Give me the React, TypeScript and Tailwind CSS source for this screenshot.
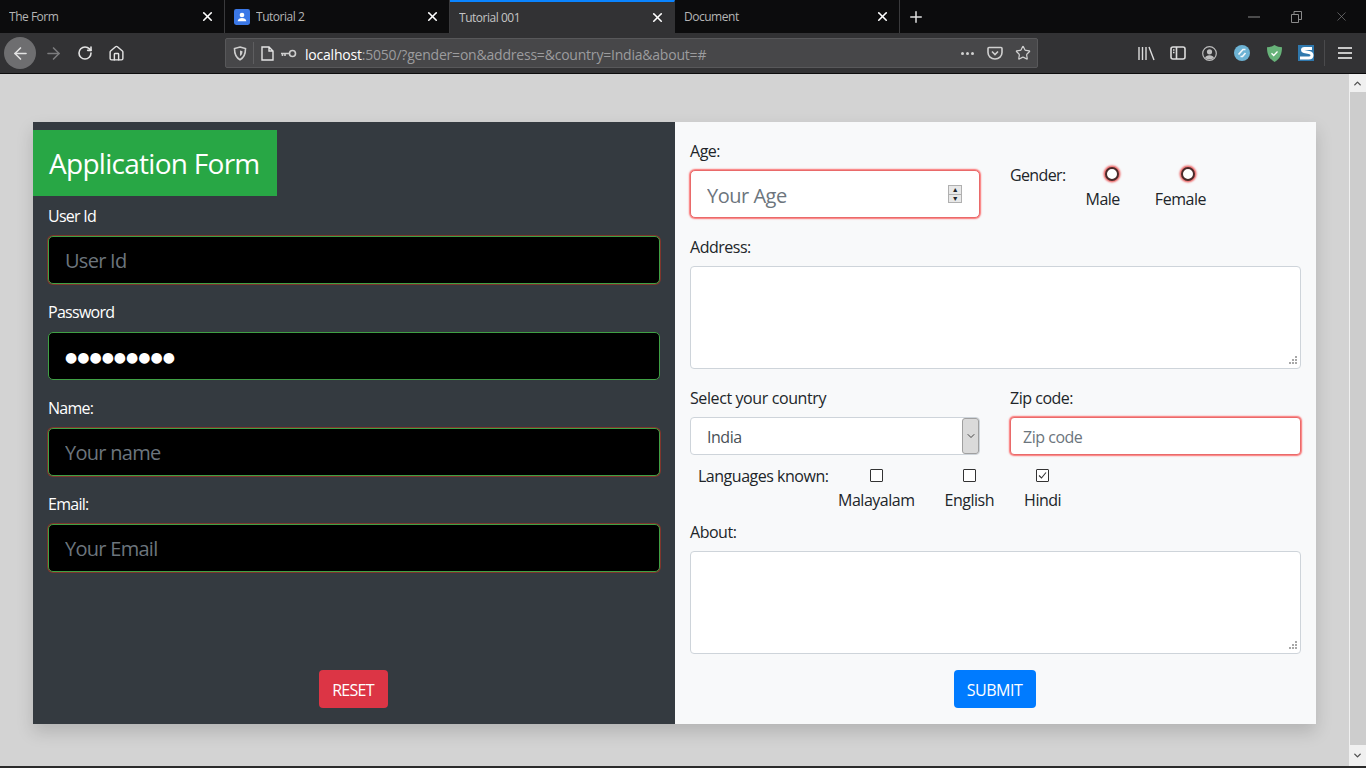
import React from 'react';
import {
    ArrowLeft,
    ArrowRight,
    ChevronDown,
    ChevronUp,
    Home,
    Plus,
    RotateCw,
    Star,
    X,
} from 'lucide-react';

const redGlow = 'shadow-[0_0_1.5px_1px_rgba(255,0,0,0.55)]';

const Tab: React.FC<{ title: string; active?: boolean; favicon?: boolean }> = ({ title, active, favicon }) => (
    <div
        className={`flex w-[225px] h-full items-center pl-[9px] pr-[9px] text-[12px] border-r ${
            active
                ? 'bg-[#323234] border-t-2 border-t-[#0a84ff] border-r-transparent text-[#c4c4c4]'
                : 'border-r-[#3a3a3c] text-[#b5b5b5]'
        }`}
    >
        {favicon && (
            <svg width="16" height="16" viewBox="0 0 15 15" className="mr-[6px] shrink-0">
                <rect width="15" height="15" rx="2" fill="#3b78e7" />
                <circle cx="7.5" cy="5.6" r="2.2" fill="#fff" />
                <path d="M3.4 11.5c.4-2.2 2-3 4.1-3s3.7.8 4.1 3z" fill="#fff" />
            </svg>
        )}
        <span className="flex-1 truncate">{title}</span>
        <X size={15} strokeWidth={2.6} className="text-white shrink-0" />
    </div>
);

const BrowserChrome = () => (
    <div className="shrink-0">
        <div className="flex h-[33px] bg-[#0c0c0d]">
            <Tab title="The Form" />
            <Tab title="Tutorial 2" favicon />
            <Tab title="Tutorial 001" active />
            <Tab title="Document" />
            <div className="flex flex-1 items-center pl-[7px]">
                <Plus size={18} strokeWidth={2} className="text-[#e0e0e0]" />
                <div className="ml-auto flex items-center text-[#8a8a8a]">
                    <svg width="12" height="2" viewBox="0 0 12 2" stroke="currentColor" className="mr-[31px]">
                        <path d="M0 1h12" />
                    </svg>
                    <svg width="11" height="12" viewBox="0 0 11 12" fill="none" stroke="currentColor" className="mr-[32px]">
                        <path d="M.5 3.500h7v8h-7zM3 3.500V.5h7.500v8H8" />
                    </svg>
                    <X size={15} strokeWidth={1} className="mr-[17px]" />
                </div>
            </div>
        </div>
        <div className="flex h-[41px] items-center bg-[#323234] border-b border-b-[#0c0c0d] text-[#e3e3e3]">
            <div className="flex h-[32px] w-[32px] ml-[4px] items-center justify-center rounded-full bg-[#6e6e70]">
                <ArrowLeft size={19} strokeWidth={2} />
            </div>
            <ArrowRight size={19} strokeWidth={2} className="ml-[8px] text-[#7c7c7e]" />
            <RotateCw size={16} strokeWidth={2.4} className="ml-[14px]" />
            <Home size={17} strokeWidth={2} className="ml-[15px]" />
            <div className="flex h-[30px] w-[813px] ml-[100px] items-center rounded-[2px] border border-[#58585a] bg-[#474749] text-[14px] tracking-[-0.015em]">
                <svg width="14" height="15" viewBox="0 0 14 15" fill="none" stroke="#cfcfcf" strokeWidth="1.6" className="ml-[7px]">
                    <path d="M7 1l5.5 1.6c0 5-1 9-5.500 11.200C2.500 11.600 1.500 7.600 1.500 2.600z" />
                    <path d="M7 4.500l2.500.7c0 2.200-.5 3.800-2.500 4.800z" fill="#cfcfcf" stroke="none" />
                </svg>
                <div className="ml-[6px] h-[22px] w-px bg-[#5e5e60]" />
                <svg width="13" height="15" viewBox="0 0 13 15" fill="none" stroke="#e3e3e3" strokeWidth="1.4" className="ml-[7px]">
                    <path d="M1 1h7l4 4v9H1zM8 1v4h4" />
                </svg>
                <svg width="17" height="9" viewBox="0 0 17 9" fill="none" stroke="#cfcfcf" strokeWidth="1.6" className="ml-[6px]">
                    <circle cx="12.500" cy="4.500" r="3" />
                    <path d="M9.500 4.500H1M2.500 4.500V7M5 4.500V7" />
                </svg>
                <span className="ml-[8px] flex-1 pt-[2px] text-[#9c9c9e] whitespace-nowrap">
                    <span className="text-white">localhost</span>:5050/?gender=on&amp;address=&amp;country=India&amp;about=#
                </span>
                <span className="flex gap-[2px] mr-[13px]">
                    <i className="h-[3px] w-[3px] rounded-full bg-[#d0d0d0]" />
                    <i className="h-[3px] w-[3px] rounded-full bg-[#d0d0d0]" />
                    <i className="h-[3px] w-[3px] rounded-full bg-[#d0d0d0]" />
                </span>
                <svg width="16" height="15" viewBox="0 0 16 15" fill="none" stroke="#d0d0d0" strokeWidth="1.6" className="mr-[12px]">
                    <path d="M2 1.500h12c.500 0 1 .4 1 1v4c0 3.500-3 6.500-7 6.500S1 10 1 6.500v-4c0-.6.500-1 1-1z" />
                    <path d="M5 5.500l3 3 3-3" />
                </svg>
                <Star size={16} strokeWidth={1.8} className="text-[#d0d0d0] mr-[6px]" />
            </div>
            <svg width="17" height="15" viewBox="0 0 17 15" fill="none" stroke="#dcdcdc" strokeWidth="1.4" className="ml-[100px]">
                <path d="M1 1v13M4.500 1v13M8 1v13M11 1l5 13" />
            </svg>
            <svg width="16" height="14" viewBox="0 0 16 14" fill="none" stroke="#dcdcdc" strokeWidth="1.6" className="ml-[15px]">
                <rect x="1" y="1" width="14" height="12" rx="2" />
                <path d="M6.500 1v12M3 4h1.500M3 6.500h1.500" />
            </svg>
            <svg width="15" height="15" viewBox="0 0 15 15" className="ml-[16px]">
                <circle cx="7.500" cy="7.500" r="6.800" fill="none" stroke="#bdbdbd" strokeWidth="1.200" />
                <circle cx="7.500" cy="5.800" r="2.600" fill="#bdbdbd" />
                <path d="M3 12c.6-2 2.300-2.800 4.500-2.800S11.400 10 12 12c-2.500 1.800-6.500 1.800-9 0z" fill="#bdbdbd" />
            </svg>
            <svg width="16" height="16" viewBox="0 0 16 16" className="ml-[17px]">
                <circle cx="8" cy="8" r="8" fill="#6db3d4" />
                <path d="M4.500 9.500L9 4.500h2.500M6.500 11.500h2l3-3.500" fill="none" stroke="#f0f6fa" strokeWidth="1.700" />
            </svg>
            <svg width="15" height="17" viewBox="0 0 15 17" className="ml-[17px]">
                <path d="M7.500 0c2.500 1.600 5 2.200 7.500 2.200 0 6.500-1.800 11.500-7.500 14.800C1.800 13.700 0 8.700 0 2.200 2.500 2.200 5 1.600 7.500 0z" fill="#67b279" />
                <path d="M4.500 8.300l2.200 2.200 3.800-4" fill="none" stroke="#fff" strokeWidth="1.300" />
            </svg>
            <svg width="16" height="16" viewBox="0 0 16 16" className="ml-[16px]">
                <rect width="16" height="16" fill="#2f78ad" />
                <path d="M14 3.500H6.500C5 3.500 4.500 4.300 4.500 5c0 .8.500 1.300 1.500 1.500l5 1c2 .4 3 1.400 3 2.800 0 1.700-1.300 2.700-3.300 2.700H2" fill="none" stroke="#fff" strokeWidth="3" />
            </svg>
            <div className="ml-[10px] h-[26px] w-px bg-[#4a4a4c]" />
            <svg width="14" height="12" viewBox="0 0 14 12" stroke="#c8c8c8" strokeWidth="2" className="ml-[13px]">
                <path d="M0 1h14M0 6h14M0 11h14" />
            </svg>
        </div>
    </div>
);

const DarkField: React.FC<{ label: string; placeholder: string; value?: string; valid?: boolean }> = ({
    label,
    placeholder,
    value,
    valid,
}) => (
    <div className="mb-4">
        <label className="block mb-2 leading-6 text-white">{label}</label>
        <input
            type="text"
            readOnly
            value={value}
            placeholder={placeholder}
            className={`block h-12 w-full rounded-[5px] border border-[#3fa044] bg-black px-4 pt-[1px] text-white outline-none placeholder:text-[#6c757d] ${
                valid
                    ? "font-['DejaVu_Sans',sans-serif] text-[14px] tracking-normal"
                    : 'text-xl shadow-[0_0_0_1px_rgba(190,50,30,0.55)]'
            }`}
        />
    </div>
);

const LeftPanel = () => (
    <div className="flex w-[642px] flex-col bg-[#343a40] tracking-[-0.045em]">
        <h1 className="mt-2 flex h-[66px] w-[244px] items-center bg-[#28a745] pl-4 text-[28px] text-white">Application Form</h1>
        <div className="mt-2 px-[15px]">
            <DarkField label="User Id" placeholder="User Id" />
            <DarkField label="Password" placeholder="Password" value="●●●●●●●●●" valid />
            <DarkField label="Name:" placeholder="Your name" />
            <DarkField label="Email:" placeholder="Your Email" />
        </div>
        <button className="mt-auto mb-4 mr-[2px] h-[38px] w-[69px] self-center rounded-[4px] bg-[#dc3545] pt-[1px] text-white">RESET</button>
    </div>
);

const Choice: React.FC<{ label: string; checked?: boolean }> = ({ label, checked }) => (
    <div className="flex flex-col items-center">
        <div className="mt-[7px] mb-[6px] flex h-[13px] w-[13px] items-center justify-center rounded-[1px] border border-[#333] bg-white">
            {checked && (
                <svg width="9" height="9" viewBox="0 0 9 9" fill="none" stroke="#333" strokeWidth="1.100">
                    <path d="M1 4.500l2.500 2.500L8 1.500" />
                </svg>
            )}
        </div>
        <span className="leading-6">{label}</span>
    </div>
);

const Radio: React.FC<{ label: string; offset: string }> = ({ label, offset }) => (
    <div className="flex flex-col items-center">
        <div className={`mt-[5px] h-[14px] w-[14px] rounded-full border-2 border-[#4a2a2a] bg-white shadow-[0_0_2px_1.5px_rgba(230,0,0,0.6)] ${offset}`} />
        <span className="mt-[6px] leading-6">{label}</span>
    </div>
);

// textarea with the dotted resize grip of the reference
const Area = () => (
    <div className="relative h-[103px] rounded-[4px] border border-[#ced4da] bg-white">
        <textarea readOnly className="block h-full w-full resize-none bg-transparent outline-none" />
        <svg width="10" height="10" viewBox="0 0 10 10" fill="#a8a8a8" className="absolute right-[2px] bottom-[2px]">
            <path d="M7 0h2v2H7zM4 3h2v2H4zM7 3h2v2H7zM1 6h2v2H1zM4 6h2v2H4zM7 6h2v2H7z" />
        </svg>
    </div>
);

const RightPanel = () => (
    <div className="flex flex-1 flex-col bg-[#f8f9fa] px-[15px] pt-[17px] text-[#212529]">
        <div className="grid grid-cols-[290px_291px] gap-x-[30px]">
            <div>
                <label className="block mb-[7px] leading-6">Age:</label>
                <div className={`flex h-12 items-center rounded-[5px] border border-[#e96a6a] bg-white pl-4 pr-[17px] ${redGlow}`}>
                    <input
                        type="text"
                        readOnly
                        placeholder="Your Age"
                        className="min-w-0 flex-1 bg-transparent pt-[4px] text-xl outline-none placeholder:text-[#6c757d]"
                    />
                    <div className="flex h-[18px] w-[14px] flex-col border border-[#b0b0b0] bg-[#e8e8e8] text-[7px] leading-none">
                        <span className="flex flex-1 items-center justify-center border-b border-[#b0b0b0]">▲</span>
                        <span className="flex flex-1 items-center justify-center">▼</span>
                    </div>
                </div>
            </div>
            <div className="flex items-start pt-[24px]">
                <span className="leading-6 tracking-[-0.04em]">Gender:</span>
                <div className="ml-[20px] -mt-[1px] flex gap-[35px]">
                    <Radio label="Male" offset="ml-[18px]" />
                    <Radio label="Female" offset="ml-[16px]" />
                </div>
            </div>
        </div>
        <label className="block mt-[17px] mb-[7px] leading-6">Address:</label>
        <Area />
        <div className="mt-[17px] grid grid-cols-[290px_291px] gap-x-[30px]">
            <div>
                <label className="block mb-[7px] leading-6 tracking-[-0.025em]">Select your country</label>
                <div className="flex h-[38px] items-stretch rounded-[4px] border border-[#ced4da] bg-white pl-[16px] text-[#495057]">
                    <span className="flex-1 self-center pt-[1px]">India</span>
                    <div className="flex w-[17px] items-center justify-center rounded-[3px] border border-[#a0a0a0] bg-[#dadada]">
                        <ChevronDown size={12} strokeWidth={1.8} className="text-[#333]" />
                    </div>
                </div>
            </div>
            <div>
                <label className="block mb-[7px] leading-6">Zip code:</label>
                <input
                    type="text"
                    readOnly
                    placeholder="Zip code"
                    className={`block h-[38px] w-full rounded-[4px] border border-[#e96a6a] bg-white px-3 pt-[2px] outline-none placeholder:text-[#6c757d] ${redGlow}`}
                />
            </div>
        </div>
        <div className="mt-[7px] ml-[8px] flex items-start">
            <span className="mt-[2px] w-[140px] leading-6">Languages known:</span>
            <div className="flex gap-[30px]">
                <Choice label="Malayalam" />
                <Choice label="English" />
                <Choice label="Hindi" checked />
            </div>
        </div>
        <label className="block mt-[8px] mb-[7px] leading-6">About:</label>
        <Area />
        <button className="mt-auto mb-4 mr-[2px] h-[38px] w-[82px] self-center rounded-[4px] bg-[#007bff] pt-[1px] text-white">SUBMIT</button>
    </div>
);

const Scrollbar = () => (
    <div className="flex w-[17px] shrink-0 flex-col bg-[#f0f0f0]">
        <div className="flex h-[18px] items-center justify-center">
            <ChevronUp size={11} strokeWidth={3} className="text-[#505050]" />
        </div>
        <div className="ml-[1px] flex-1 bg-[#cdcdcd]" />
        <div className="flex h-[21px] items-center justify-center">
            <ChevronDown size={11} strokeWidth={3} className="text-[#505050]" />
        </div>
    </div>
);

export default function App() {
    return (
        <div className="flex h-screen flex-col overflow-hidden bg-[#d3d3d3] font-['Open_Sans',sans-serif] tracking-[-0.03em]">
            <BrowserChrome />
            <div className="flex min-h-0 flex-1">
                <div className="flex-1 px-[33px] pt-[48px] pb-[42px]">
                    <div className="flex h-full shadow-[0_8px_16px_rgba(0,0,0,0.15)]">
                        <LeftPanel />
                        <RightPanel />
                    </div>
                </div>
                <Scrollbar />
            </div>
            <div className="h-[2px] shrink-0 bg-[#2b2b2b]" />
        </div>
    );
}
